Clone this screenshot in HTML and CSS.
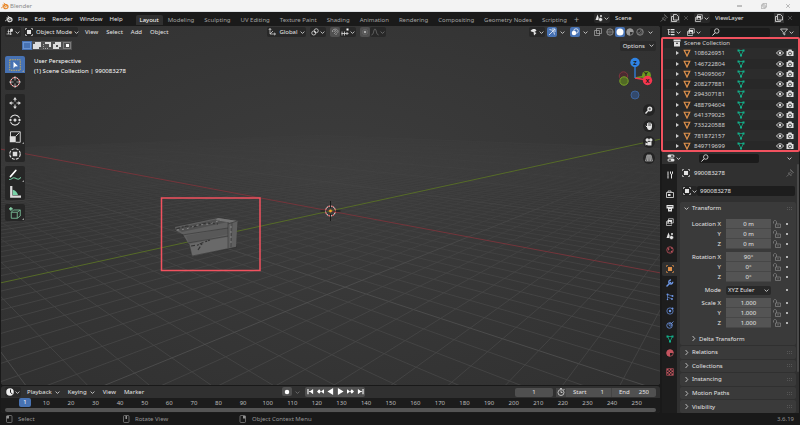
FILE: index.html
```html
<!DOCTYPE html>
<html lang="en">
<head>
    <title>Blender</title>
    <meta charset="UTF-8" />
    <link rel="stylesheet" href="styles.css">
    <script src="script.js" defer></script>
</head>
<body>
    <svg class="sprite" aria-hidden="true">
        <symbol id="blender" viewBox="0 0 16 16"><path d="M1 11.5 8 6H3.500M6 2.500l6 4.500" fill="none" stroke="currentColor" stroke-width="1.800" stroke-linecap="round"/><circle cx="9.800" cy="9.300" r="4.200" fill="none" stroke="currentColor" stroke-width="2.400"/><circle cx="9.800" cy="9.300" r="1.500" fill="currentColor"/></symbol>
        <symbol id="chevron" viewBox="0 0 8 8"><path d="M1 2.500 4 5.500 7 2.500" fill="none" stroke="currentColor" stroke-width="1.300"/></symbol>
        <symbol id="right" viewBox="0 0 8 8"><path d="M2.500 0 6 4 2.500 8" fill="none" stroke="currentColor" stroke-width="1.200"/></symbol>
        <symbol id="search" viewBox="0 0 16 16"><circle cx="9.500" cy="6" r="4.500" fill="none" stroke="currentColor" stroke-width="1.600"/><path d="M6 9.500 1 15" stroke="currentColor" stroke-width="2"/></symbol>
        <symbol id="view3d" viewBox="0 0 16 16"><path d="M5 3v9M1 12h11M3 7h10M9 5v9" stroke="currentColor" stroke-width="1.300" fill="none"/><circle cx="11" cy="4" r="3" fill="currentColor"/></symbol>
        <symbol id="object" viewBox="0 0 16 16"><rect x="4" y="4" width="8" height="8" fill="currentColor"/><path d="M1 4V1h3M12 1h3v3M15 12v3h-3M4 15H1v-3" fill="none" stroke="currentColor" stroke-width="1.300"/></symbol>
        <symbol id="axes" viewBox="0 0 16 16"><path d="M4 1v11h11M4 12l6-6M1.500 4 4 1l2.500 3M12 9.500l3 2.500-3 2.500" fill="none" stroke="currentColor" stroke-width="1.400"/></symbol>
        <symbol id="pivot" viewBox="0 0 16 16"><circle cx="5.500" cy="10" r="4" fill="none" stroke="currentColor" stroke-width="1.500"/><circle cx="10.500" cy="5.500" r="4" fill="none" stroke="currentColor" stroke-width="1.500"/><circle cx="8" cy="8" r="1.500" fill="currentColor"/></symbol>
        <symbol id="magnet" viewBox="0 0 16 16"><path d="M3 8C1 1 14 0 14 7c0 3-3 4-5 7M6.500 8C6 4 11 4 10.500 7 10 9 8 9 6.500 12" fill="none" stroke="currentColor" stroke-width="1.600"/></symbol>
        <symbol id="snap" viewBox="0 0 16 16"><path d="M1 11h14M2 7v8M7 7v8M12 8v6" stroke="currentColor" stroke-width="1.500"/><rect x="11" y="1" width="4" height="4" fill="#fff"/></symbol>
        <symbol id="dot" viewBox="0 0 16 16"><circle cx="8" cy="8" r="5.500" fill="none" stroke="currentColor" stroke-opacity=".4"/><circle cx="8" cy="8" r="2.500" fill="currentColor"/></symbol>
        <symbol id="falloff" viewBox="0 0 16 16"><path d="M1 14C6 13 5 2 8 2s2 11 7 12" fill="none" stroke="currentColor" stroke-width="1.500"/></symbol>
        <symbol id="pointer" viewBox="0 0 16 16"><path d="M1 6C5 1 10 1 13 5 9 9 5 9 1 6z" fill="currentColor"/><path d="M7 7l1 8 5-5z" fill="currentColor"/></symbol>
        <symbol id="gizmo" viewBox="0 0 16 16"><path d="M2 14 13 3M8 2h6v6M3 3c6 1 9 4 10 10" fill="none" stroke="currentColor" stroke-width="1.500"/></symbol>
        <symbol id="overlay" viewBox="0 0 16 16"><circle cx="6" cy="10" r="4.500" fill="currentColor"/><circle cx="10" cy="6" r="4.500" fill="none" stroke="currentColor" stroke-width="1.500"/></symbol>
        <symbol id="xray" viewBox="0 0 16 16"><path d="M5 1h10v10H5zM1 5h10v10H1z" fill="none" stroke="currentColor" stroke-width="1.400"/></symbol>
        <symbol id="wire" viewBox="0 0 16 16"><circle cx="8" cy="8" r="6.500" fill="none" stroke="currentColor" stroke-width="1.400"/><path d="M1 8h14M8 1v14M5 2c-2 4-2 8 0 12M11 2c2 4 2 8 0 12" fill="none" stroke="currentColor"/></symbol>
        <symbol id="solid" viewBox="0 0 16 16"><circle cx="8" cy="8" r="7" fill="#fff"/></symbol>
        <symbol id="material" viewBox="0 0 16 16"><circle cx="8" cy="8" r="6.500" fill="none" stroke="currentColor" stroke-width="1.500"/><path d="M8 1a7 7 0 0 0 0 14V8h7A7 7 0 0 0 8 1z" fill="currentColor"/></symbol>
        <symbol id="rendered" viewBox="0 0 16 16"><circle cx="8" cy="8" r="6.500" fill="none" stroke="currentColor" stroke-width="1.500"/><path d="M12 4a6 6 0 0 1-8 8M10 3a6 6 0 0 1-7 7" stroke="currentColor" fill="none"/></symbol>
        <symbol id="scene" viewBox="0 0 16 16"><path d="M5 1 9 12H1z" fill="currentColor"/><circle cx="11" cy="11" r="4" fill="currentColor" stroke="#222"/><circle cx="12" cy="4" r="2" fill="currentColor"/></symbol>
        <symbol id="layers" viewBox="0 0 16 16"><path d="M5 5V1.500h9.500V10H11M3 7H1v8h10v-2" fill="none" stroke="currentColor" stroke-width="1.400"/><rect x="3" y="4" width="9" height="8" fill="currentColor"/><path d="m4 11 3-4 2 2 1-1 1 3z" fill="#222"/></symbol>
        <symbol id="copy" viewBox="0 0 16 16"><path d="M5 1h6l4 4v7H5z M4 5H1v10h10v-2" fill="none" stroke="currentColor" stroke-width="1.600"/></symbol>
        <symbol id="close" viewBox="0 0 16 16"><path d="m3 3 10 10M13 3 3 13" stroke="currentColor" stroke-width="1.500"/></symbol>
        <symbol id="pin" viewBox="0 0 16 16"><path d="m9 1 6 6-2 .500-3 3v3L4.500 8h3l3-3zM7 10l-6 5" fill="none" stroke="currentColor" stroke-width="1.400"/></symbol>
        <symbol id="tree" viewBox="0 0 16 16"><path d="M1 3h5M3 3v10h4M3 8h4" fill="none" stroke="currentColor" stroke-width="1.500"/><path d="M7 3h8M8 8h7M8 13h7" stroke="currentColor" stroke-width="2.500"/></symbol>
        <symbol id="filter" viewBox="0 0 16 16"><path d="M1 2h14L9.500 8.500V14l-3-2V8.500z" fill="none" stroke="currentColor" stroke-width="1.500"/></symbol>
        <symbol id="box" viewBox="0 0 16 16"><path d="M1 1h14v4H1zM2 6h12v9H2z" fill="currentColor"/><path d="M6 8.500h4" stroke="#222" stroke-width="2"/></symbol>
        <symbol id="mesh" viewBox="0 0 16 16"><path d="M2.500 2.500h11L8 14z" fill="none" stroke="currentColor" stroke-width="2.400"/></symbol>
        <symbol id="meshdata" viewBox="0 0 16 16"><path d="M3 3h10L8 13z" fill="none" stroke="currentColor" stroke-width="1.500"/><path d="M1 1h4v4H1zM11 1h4v4h-4zM6 11h4v4H6z" fill="currentColor"/></symbol>
        <symbol id="eye" viewBox="0 0 16 16"><path d="M1 8c4-6 10-6 14 0-4 6-10 6-14 0z" fill="none" stroke="currentColor" stroke-width="1.700"/><circle cx="8" cy="8" r="2.500" fill="currentColor"/></symbol>
        <symbol id="camera" viewBox="0 0 16 16"><path d="M1 4h3l1-3h6l1 3h3v10H1z" fill="currentColor"/><circle cx="8" cy="9" r="3" fill="none" stroke="#222" stroke-width="1.600"/></symbol>
        <symbol id="props" viewBox="0 0 16 16"><path d="M4 4h8M4 12h8" stroke="currentColor" stroke-width="6" stroke-linecap="round"/><path d="M9 4h3M4 12h3" stroke="#222" stroke-width="2.500" stroke-linecap="round"/></symbol>
        <symbol id="lock" viewBox="0 0 16 16"><path d="M1 7V4c0-4 6-4 6 0v4M5 8h10v7H5zM10 10v3" fill="none" stroke="currentColor" stroke-width="1.400"/></symbol>
        <symbol id="tool" viewBox="0 0 16 16"><path d="M4 1v8M4 9v6M9 1v4c0 2 4 2 4 0V1M11 6v9" fill="none" stroke="currentColor" stroke-width="2"/></symbol>
        <symbol id="render" viewBox="0 0 16 16"><path d="M1 5h14v10H1zM4 4V2h6v2" fill="none" stroke="currentColor" stroke-width="1.600"/><path d="M4 8h5v4H4z" fill="currentColor"/></symbol>
        <symbol id="output" viewBox="0 0 16 16"><path d="M1 2h14v7H1zM4 9h8v6H4z" fill="currentColor"/><path d="M3 5h10M6 11h4" stroke="#222" stroke-width="1.300"/></symbol>
        <symbol id="world" viewBox="0 0 16 16"><circle cx="8" cy="8" r="6.500" fill="none" stroke="currentColor" stroke-width="1.500"/><path d="M3 4c4 0 5 2 3 4s2 3 1 6M10 2c-1 3 1 4 4 4M9 10l5-1-3 4z" fill="currentColor"/></symbol>
        <symbol id="wrench" viewBox="0 0 16 16"><path d="m2 14 7-7" stroke="currentColor" stroke-width="3" stroke-linecap="round"/><path d="M13.500 5.500A4 4 0 1 1 10 2" fill="none" stroke="currentColor" stroke-width="2.600"/></symbol>
        <symbol id="particles" viewBox="0 0 16 16"><path d="M3 3v10M3 3l10 3M3 8l9 4" stroke="currentColor" stroke-width="1.200"/><circle cx="3" cy="3" r="2" fill="currentColor"/><circle cx="13" cy="6" r="2" fill="currentColor"/><circle cx="12" cy="12" r="1.800" fill="currentColor"/><circle cx="3" cy="13" r="1.500" fill="currentColor"/></symbol>
        <symbol id="physics" viewBox="0 0 16 16"><circle cx="8" cy="8" r="6.300" fill="none" stroke="currentColor" stroke-width="1.400"/><circle cx="8" cy="8" r="2.500" fill="currentColor"/><circle cx="13" cy="3" r="2" fill="currentColor"/></symbol>
        <symbol id="constraint" viewBox="0 0 16 16"><circle cx="7" cy="9" r="5.500" fill="none" stroke="currentColor" stroke-width="1.600"/><circle cx="9" cy="7" r="3" fill="none" stroke="currentColor" stroke-width="1.600"/><path d="M9 7l6-6" stroke="currentColor" stroke-width="1.600"/></symbol>
        <symbol id="checker" viewBox="0 0 16 16"><rect x="1.500" y="1.500" width="13" height="13" fill="none" stroke="currentColor" stroke-width="1.400"/><path d="M2 2h3v3H2zM8 2h3v3H8zM5 5h3v3H5zM11 5h3v3h-3zM2 8h3v3H2zM8 8h3v3H8zM5 11h3v3H5zM11 11h3v3h-3z" fill="currentColor"/></symbol>
        <symbol id="select" viewBox="0 0 16 16"><rect x="1" y="1" width="14" height="14" fill="none" stroke="#d9b24c" stroke-width="1.200" stroke-dasharray="2 1.200"/><path d="M6 3.500v9l2-2.500 4-.500z" fill="#fff"/></symbol>
        <symbol id="cursor" viewBox="0 0 16 16"><circle cx="8" cy="8" r="6" fill="none" stroke="#eee" stroke-width="1.300"/><circle cx="8" cy="8" r="6" fill="none" stroke="#d44" stroke-width="1.300" stroke-dasharray="2.300 2.400"/><path d="M8 0v6M8 10v6M0 8h6M10 8h6" stroke="#ccc"/></symbol>
        <symbol id="move" viewBox="0 0 16 16"><path d="M8 2v4M8 10v4M2 8h4M10 8h4" stroke="currentColor" stroke-width="1.300"/><path d="M8 0l2.500 3.500h-5zM8 16l2.500-3.500h-5zM0 8l3.500-2.500v5zM16 8l-3.500-2.500v5z" fill="currentColor"/></symbol>
        <symbol id="rotate" viewBox="0 0 16 16"><path d="M2 5c3-5 9-5 12 0M2 11c3 5 9 5 12 0" fill="none" stroke="currentColor" stroke-width="1.500"/><path d="M8 5.500l2.500 2.500-2.500 2.500-2.500-2.500z" fill="currentColor"/><path d="M0 8l2-2 2 2-2 2zM12 8l2-2 2 2-2 2z" fill="currentColor"/></symbol>
        <symbol id="scale" viewBox="0 0 16 16"><path d="M2 8V1h13v14H9M9 7l5-5" fill="none" stroke="currentColor" stroke-width="1.200"/><path d="M1 7h8v8H1z" fill="currentColor"/></symbol>
        <symbol id="transform" viewBox="0 0 16 16"><circle cx="8" cy="8" r="7" fill="none" stroke="currentColor" stroke-width="1.500" stroke-dasharray="4 1.500"/><rect x="5" y="5" width="6" height="6" fill="currentColor"/></symbol>
        <symbol id="annotate" viewBox="0 0 16 16"><path d="M2 10 9 2" stroke="#fff" stroke-width="2.400" stroke-linecap="round"/><path d="M0 14c4 1 4-4 8-2s4 3 8-1" fill="none" stroke="#6fc29a" stroke-width="1.400"/></symbol>
        <symbol id="measure" viewBox="0 0 16 16"><path d="M5 12V5c4 1 6 4 7 7z" fill="#79d3a8"/><path d="M3 0v14h13" fill="none" stroke="#ddd" stroke-width="3"/></symbol>
        <symbol id="addcube" viewBox="0 0 16 16"><path d="M3 7h8v8H3zM3 7l3-3h9l-4 3M15 4v8l-4 3" fill="none" stroke="#79bd97" stroke-width="1.200"/><path d="M2.500 0v5M0 2.500h5" stroke="#8fe0b4" stroke-width="1.500"/></symbol>
        <symbol id="zoomin" viewBox="0 0 16 16"><circle cx="9.500" cy="6" r="5" fill="currentColor"/><path d="M6 9.500 1 15" stroke="currentColor" stroke-width="2.500"/><path d="M9.500 3.500v5M7 6h5" stroke="#222" stroke-width="1.200"/></symbol>
        <symbol id="hand" viewBox="0 0 16 16"><path d="M5 9V3M7.700 8V1.500M10.300 8V2M13 9V4M2 8l4 4" stroke="currentColor" stroke-width="1.900" stroke-linecap="round"/><path d="M4 8h10c0 4-1 8-5 8s-4-3-5-5z" fill="currentColor"/></symbol>
        <symbol id="movie" viewBox="0 0 16 16"><circle cx="4.500" cy="4" r="3.500" fill="currentColor"/><circle cx="11.500" cy="4" r="3.500" fill="currentColor"/><path d="M5 8h8v7H5zM1 9l4 2v2l-4 2z" fill="currentColor"/></symbol>
        <symbol id="persp" viewBox="0 0 16 16"><path d="M4 2h8l3 12H1zM3 6h10M2 10h12M8 2v12M6 2 5 14M10 2l1 12" fill="none" stroke="currentColor" stroke-width="1.100"/></symbol>
        <symbol id="clock" viewBox="0 0 16 16"><circle cx="8" cy="8" r="7.500" fill="#eee"/><path d="M9 3v6l4 3" fill="none" stroke="#222" stroke-width="2"/></symbol>
        <symbol id="stopwatch" viewBox="0 0 16 16"><circle cx="8" cy="9" r="6" fill="none" stroke="currentColor" stroke-width="1.500"/><path d="M8 5v4h3M6 1h4M13 2l2 2" fill="none" stroke="currentColor" stroke-width="1.500"/></symbol>
        <symbol id="record" viewBox="0 0 16 16"><circle cx="8" cy="8" r="4.500" fill="#fff"/></symbol>
        <symbol id="first" viewBox="0 0 16 16"><path d="M1 2h2.500v12H1zM14 2v12L6 8zM5 7h4v2H5z" fill="currentColor"/></symbol>
        <symbol id="prevkey" viewBox="0 0 16 16"><path d="M5 3l4 5-4 5-5-5zM16 3v10L9 8z" fill="currentColor"/></symbol>
        <symbol id="play" viewBox="0 0 16 16"><path d="M2 0v16l13-8z" fill="currentColor"/></symbol>
        <symbol id="mouse" viewBox="0 0 16 16"><rect x="3" y="1" width="11" height="14" rx="2" fill="none" stroke="currentColor" stroke-width="1.300"/><path d="M3 2h5v5H3z" fill="currentColor"/></symbol>
        <symbol id="mouseMiddle" viewBox="0 0 16 16"><rect x="3" y="1" width="11" height="14" rx="2" fill="none" stroke="currentColor" stroke-width="1.300"/><path d="M7 2h3v6H7z" fill="currentColor"/></symbol>
    </svg>

    <header class="titlebar">
        <svg class="icon logo"><use href="#blender"/></svg>
        <span>Blender</span>
        <div class="windowButtons">
            <button aria-label="Minimize"><svg class="icon small"><path d="M0 3h5" stroke="currentColor"/></svg></button>
            <button aria-label="Restore"><svg class="icon small" viewBox="0 0 16 16"><use href="#xray"/></svg></button>
            <button aria-label="Close"><svg class="icon small"><use href="#close"/></svg></button>
        </div>
    </header>

    <nav class="topbar">
        <div class="menus">
            <svg class="icon"><use href="#blender"/></svg>
            <button>File</button>
            <button>Edit</button>
            <button>Render</button>
            <button>Window</button>
            <button>Help</button>
        </div>
        <div class="workspaces">
            <button class="active">Layout</button>
            <button>Modeling</button>
            <button>Sculpting</button>
            <button>UV Editing</button>
            <button>Texture Paint</button>
            <button>Shading</button>
            <button>Animation</button>
            <button>Rendering</button>
            <button>Compositing</button>
            <button>Geometry Nodes</button>
            <button>Scripting</button>
            <button class="plus">+</button>
        </div>
        <div class="idBlock">
            <button class="drop" aria-label="Browse scene"><svg class="icon"><use href="#scene"/></svg><svg class="chev"><use href="#chevron"/></svg></button>
            <input type="text" value="Scene" aria-label="Scene">
            <svg class="icon dim"><use href="#pin"/></svg>
            <button class="copy" aria-label="New scene"><svg class="icon"><use href="#copy"/></svg></button>
            <button class="remove" aria-label="Delete scene"><svg class="icon small"><use href="#close"/></svg></button>
        </div>
        <div class="idBlock">
            <button class="drop" aria-label="Browse view layer"><svg class="icon"><use href="#layers"/></svg><svg class="chev"><use href="#chevron"/></svg></button>
            <input type="text" class="wide" value="ViewLayer" aria-label="View layer">
            <button class="copy" aria-label="New view layer"><svg class="icon"><use href="#copy"/></svg></button>
            <button class="remove" aria-label="Remove view layer"><svg class="icon small"><use href="#close"/></svg></button>
        </div>
    </nav>

    <main class="editors">
        <div class="leftColumn">
            <section class="viewport">
                <svg class="scene" viewBox="1 26 659 359" preserveAspectRatio="xMidYMid slice">
                    <defs>
                        <radialGradient id="ground" cx=".5" cy=".45" r=".7">
                            <stop offset="0" stop-color="#3d3d3d"/>
                            <stop offset="1" stop-color="#313131"/>
                        </radialGradient>
                        <linearGradient id="fade" gradientUnits="userSpaceOnUse" x1="0" y1="118" x2="0" y2="290">
                            <stop offset="0" stop-color="#000"/>
                            <stop offset=".25" stop-color="#444"/>
                            <stop offset="1" stop-color="#fff"/>
                        </linearGradient>
                        <mask id="fadeMask" maskUnits="userSpaceOnUse" x="0" y="26" width="662" height="360"><rect x="0" y="26" width="662" height="360" fill="url(#fade)"/></mask>
                    </defs>
                    <rect x="0" y="26" width="662" height="360" fill="url(#ground)"/>
                    <g id="floor" mask="url(#fadeMask)"></g>
                    <path class="axisX" d="M0 149 330 211 661 273"/>
                    <path class="axisY" d="M0 283 330 211 661 139"/>
                    <g class="model">
                        <path fill="#606060" d="M175 227l43-9 19.500 3-1.500 26-44 9.500-3-12-6-10-7-4z"/>
                        <path fill="#505050" d="M176 228l42-9 10 3-46 10z"/>
                        <path fill="#585858" d="M186 236l42-8v6l-39 9z"/>
                        <path fill="#696969" d="M190 244l38-7v11l-36 8z"/>
                        <path fill="#747474" d="M218 218l19.500 3-8 1.500-14-2.500z"/>
                        <path fill="none" stroke="#2d2d2d" stroke-width=".5" d="M182 235l46-7M188 243l40-7M228 222v26M232 223l-1 24M192 256l45-9M237 221l-9 3M189 244l3 12"/>
                        <path fill="none" stroke="#333" stroke-width="1.200" stroke-dasharray="4 2 2 1" d="M176 229l11-3 6 1 13-4 12 1M191 246l7-1 4-2 8-3M198 250l4-6"/>
                        <path fill="none" stroke="#909090" stroke-width=".8" stroke-dasharray="2 3" d="M177 230l9-1 12-4 12-1 11-4M231 226v20"/>
                    </g>
                    <g transform="translate(330.500 211)">
                        <circle r="5" fill="none" stroke="#eee"/>
                        <circle r="5" fill="none" stroke="#d33" stroke-dasharray="2 2"/>
                        <path d="M0-10v7M0 3v7M-10 0h7M3 0h7" stroke="#171717" stroke-width=".9"/>
                        <circle r="1.400" fill="#f5a128"/>
                    </g>
                    <rect class="mark" x="161.500" y="198" width="98.500" height="72.500"/>
                </svg>

                <div class="header">
                    <button class="drop" aria-label="Editor type"><svg class="icon"><use href="#view3d"/></svg><svg class="chev"><use href="#chevron"/></svg></button>
                    <label class="drop mode">
                        <svg class="icon"><use href="#object"/></svg>
                        <select aria-label="Mode"><option>Object Mode</option></select>
                        <svg class="chev"><use href="#chevron"/></svg>
                    </label>
                    <div class="menus">
                        <button>View</button>
                        <button>Select</button>
                        <button>Add</button>
                        <button>Object</button>
                    </div>
                    <div class="snapping">
                        <label class="drop orient">
                            <svg class="icon"><use href="#axes"/></svg>
                            <select aria-label="Transform orientation"><option>Global</option></select>
                            <svg class="chev"><use href="#chevron"/></svg>
                        </label>
                        <button class="drop" aria-label="Pivot point"><svg class="icon"><use href="#pivot"/></svg><svg class="chev"><use href="#chevron"/></svg></button>
                        <div class="joined">
                            <button class="toggle" aria-label="Snap"><svg class="icon"><use href="#magnet"/></svg></button>
                            <button class="drop" aria-label="Snap to"><svg class="icon"><use href="#snap"/></svg><svg class="chev"><use href="#chevron"/></svg></button>
                        </div>
                        <div class="joined">
                            <button class="toggle" aria-label="Proportional editing"><svg class="icon"><use href="#dot"/></svg></button>
                            <button class="drop dim" aria-label="Falloff"><svg class="icon"><use href="#falloff"/></svg><svg class="chev"><use href="#chevron"/></svg></button>
                        </div>
                    </div>
                    <div class="display">
                        <button class="drop" aria-label="Visibility"><svg class="icon"><use href="#pointer"/></svg><svg class="chev"><use href="#chevron"/></svg></button>
                        <div class="joined">
                            <button class="toggle on" aria-label="Gizmos"><svg class="icon"><use href="#gizmo"/></svg></button>
                            <button class="arrow" aria-label="Gizmo options"><svg class="chev"><use href="#chevron"/></svg></button>
                        </div>
                        <div class="joined">
                            <button class="toggle on" aria-label="Overlays"><svg class="icon"><use href="#overlay"/></svg></button>
                            <button class="arrow" aria-label="Overlay options"><svg class="chev"><use href="#chevron"/></svg></button>
                        </div>
                        <button class="toggle" aria-label="X-ray"><svg class="icon"><use href="#xray"/></svg></button>
                        <div class="joined">
                            <button class="shade" aria-label="Wireframe"><svg class="icon"><use href="#wire"/></svg></button>
                            <button class="shade on" aria-label="Solid"><svg class="icon"><use href="#solid"/></svg></button>
                            <button class="shade" aria-label="Material preview"><svg class="icon"><use href="#material"/></svg></button>
                            <button class="shade" aria-label="Rendered"><svg class="icon"><use href="#rendered"/></svg></button>
                            <button class="arrow" aria-label="Shading options"><svg class="chev"><use href="#chevron"/></svg></button>
                        </div>
                    </div>
                </div>

                <div class="toolSettings">
                    <div class="selectModes">
                        <button class="on" aria-label="Set"><svg viewBox="0 0 10 9"><rect x="1.500" y="1.500" width="7" height="6" fill="none" stroke="#8db4ee" stroke-dasharray="1 1"/></svg></button>
                        <button aria-label="Extend"><svg viewBox="0 0 10 9"><path d="M3 1h6v5H7v2H1V3h2z" fill="#ddd"/></svg></button>
                        <button aria-label="Subtract"><svg viewBox="0 0 10 9"><path d="M3 1h6v5H7V3H3z" fill="#ddd"/><path d="M1.500 3v4.500H7" fill="none" stroke="#aaa" stroke-dasharray="1 1"/></svg></button>
                        <button aria-label="Invert"><svg viewBox="0 0 10 9"><path d="M3 1h6v5H7v2H1V3h2zM4 4v2h2V4z" fill="#ddd" fill-rule="evenodd"/></svg></button>
                        <button aria-label="Intersect"><svg viewBox="0 0 10 9"><rect x="1.500" y="1.500" width="7" height="6" fill="none" stroke="#aaa" stroke-dasharray="1 1"/><path d="M4 3h3v3H4z" fill="#fff"/></svg></button>
                    </div>
                    <button class="options">Options<svg class="chev"><use href="#chevron"/></svg></button>
                </div>

                <div class="canvasOverlay">
                    <div class="toolbar">
                        <div class="toolGroup">
                            <button class="on more" aria-label="Select box"><svg><use href="#select"/></svg></button>
                            <button aria-label="Cursor"><svg><use href="#cursor"/></svg></button>
                        </div>
                        <div class="toolGroup">
                            <button aria-label="Move"><svg><use href="#move"/></svg></button>
                            <button aria-label="Rotate"><svg><use href="#rotate"/></svg></button>
                            <button class="more" aria-label="Scale"><svg><use href="#scale"/></svg></button>
                            <button aria-label="Transform"><svg><use href="#transform"/></svg></button>
                        </div>
                        <div class="toolGroup">
                            <button class="more" aria-label="Annotate"><svg><use href="#annotate"/></svg></button>
                            <button aria-label="Measure"><svg><use href="#measure"/></svg></button>
                        </div>
                        <div class="toolGroup">
                            <button class="more" aria-label="Add cube"><svg><use href="#addcube"/></svg></button>
                        </div>
                    </div>
                    <div class="viewInfo">
                        <div>User Perspective</div>
                        <div>(1) Scene Collection | 990083278</div>
                    </div>
                    <div class="navigation">
                        <svg class="navGizmo" viewBox="0 0 40 44">
                            <circle cx="8.500" cy="20" r="4.200" fill="#4a2b30" stroke="#80343f"/>
                            <path d="M20 22l11-2" stroke="#6d9a20" stroke-width="1.300"/>
                            <circle cx="31.500" cy="19.500" r="4.500" fill="#6d9a20"/>
                            <path d="M20 22l12 2" stroke="#f0364f" stroke-width="1.300"/>
                            <circle cx="9" cy="25" r="4.200" fill="#516a24" stroke="#7ba428"/>
                            <circle cx="20" cy="39" r="4" fill="#33496b" stroke="#3d639b"/>
                            <path d="M20 22V8" stroke="#2f83e3" stroke-width="1.300"/>
                            <circle cx="20" cy="6.500" r="4.700" fill="#2f83e3"/>
                            <text x="31" y="20">Y</text>
                            <circle cx="32.500" cy="24.500" r="4.700" fill="#f5364f"/>
                            <text x="20" y="8.500">Z</text>
                            <text x="32.500" y="27">X</text>
                        </svg>
                        <button aria-label="Zoom"><svg class="icon"><use href="#zoomin"/></svg></button>
                        <button aria-label="Pan"><svg class="icon"><use href="#hand"/></svg></button>
                        <button aria-label="Camera view"><svg class="icon"><use href="#movie"/></svg></button>
                        <button aria-label="Perspective"><svg class="icon"><use href="#persp"/></svg></button>
                    </div>
                </div>
            </section>

            <section class="timeline">
                <div class="header">
                    <button class="drop" aria-label="Editor type"><svg class="icon"><use href="#clock"/></svg><svg class="chev"><use href="#chevron"/></svg></button>
                    <div class="menus">
                        <button class="pop">Playback<svg class="chev"><use href="#chevron"/></svg></button>
                        <button class="pop">Keying<svg class="chev"><use href="#chevron"/></svg></button>
                        <button>View</button>
                        <button>Marker</button>
                    </div>
                    <div class="playback">
                        <div class="joined">
                            <button class="toggle" aria-label="Auto keying"><svg class="icon"><use href="#record"/></svg></button>
                            <button class="arrow dim" aria-label="Keying options"><svg class="chev"><use href="#chevron"/></svg></button>
                        </div>
                        <div class="transport">
                            <button aria-label="Jump to start"><svg><use href="#first"/></svg></button>
                            <button aria-label="Previous keyframe"><svg><use href="#prevkey"/></svg></button>
                            <button aria-label="Play reversed"><svg class="flip"><use href="#play"/></svg></button>
                            <button aria-label="Play"><svg><use href="#play"/></svg></button>
                            <button aria-label="Next keyframe"><svg class="flip"><use href="#prevkey"/></svg></button>
                            <button aria-label="Jump to end"><svg class="flip"><use href="#first"/></svg></button>
                        </div>
                    </div>
                    <div class="frames">
                        <input type="text" class="current" value="1" aria-label="Current frame">
                        <div class="range">
                            <button aria-label="Preview range"><svg class="icon"><use href="#stopwatch"/></svg></button>
                            <label>Start<input type="text" value="1"></label>
                            <label>End<input type="text" value="250"></label>
                        </div>
                    </div>
                </div>
                <div class="ruler">
                    <div class="startCell"><span class="playhead">1</span></div>
                    <div class="ticks" id="ticks"></div>
                </div>
                <div class="scroller"><div class="thumb"></div></div>
            </section>
        </div>

        <div class="rightColumn">
            <section class="outliner">
                <div class="header">
                    <button class="drop" aria-label="Editor type"><svg class="icon"><use href="#tree"/></svg><svg class="chev"><use href="#chevron"/></svg></button>
                    <button class="drop" aria-label="Display mode"><svg class="icon"><use href="#layers"/></svg><svg class="chev"><use href="#chevron"/></svg></button>
                    <label class="search"><svg class="icon"><use href="#search"/></svg><input type="text" aria-label="Filter objects"></label>
                    <button class="drop end" aria-label="Filter"><svg class="icon"><use href="#filter"/></svg><svg class="chev"><use href="#chevron"/></svg></button>
                </div>
                <ul class="tree" id="objectTree">
                    <li class="root"><svg class="icon"><use href="#box"/></svg><span>Scene Collection</span></li>
                </ul>
                <div class="outlinerMark"></div>
            </section>

            <section class="properties">
                <div class="header">
                    <button class="drop" aria-label="Editor type"><svg class="icon"><use href="#props"/></svg><svg class="chev"><use href="#chevron"/></svg></button>
                    <label class="search"><svg class="icon"><use href="#search"/></svg><input type="text" aria-label="Search properties"></label>
                    <button class="arrow end" aria-label="Options"><svg class="chev"><use href="#chevron"/></svg></button>
                </div>
                <div class="propertiesBody">
                    <div class="tabs">
                        <div><button aria-label="Tool"><svg class="icon"><use href="#tool"/></svg></button></div>
                        <div>
                            <button aria-label="Render"><svg class="icon"><use href="#render"/></svg></button>
                            <button aria-label="Output"><svg class="icon"><use href="#output"/></svg></button>
                            <button aria-label="View layer"><svg class="icon"><use href="#layers"/></svg></button>
                            <button aria-label="Scene"><svg class="icon"><use href="#scene"/></svg></button>
                            <button class="red" aria-label="World"><svg class="icon"><use href="#world"/></svg></button>
                        </div>
                        <div>
                            <button class="orange active" aria-label="Object"><svg class="icon"><use href="#object"/></svg></button>
                            <button class="blue" aria-label="Modifiers"><svg class="icon"><use href="#wrench"/></svg></button>
                            <button class="blue" aria-label="Particles"><svg class="icon"><use href="#particles"/></svg></button>
                            <button class="blue" aria-label="Physics"><svg class="icon"><use href="#physics"/></svg></button>
                            <button class="blue" aria-label="Constraints"><svg class="icon"><use href="#constraint"/></svg></button>
                            <button class="green" aria-label="Data"><svg class="icon"><use href="#meshdata"/></svg></button>
                            <button class="red" aria-label="Material"><svg class="icon"><use href="#material"/></svg></button>
                        </div>
                        <div><button class="red" aria-label="Texture"><svg class="icon"><use href="#checker"/></svg></button></div>
                    </div>
                    <div class="panels">
                        <div class="context"><svg class="icon"><use href="#object"/></svg><span>990083278</span><svg class="icon dim"><use href="#pin"/></svg></div>
                        <div class="datablock">
                            <button class="drop" aria-label="Browse object"><svg class="icon"><use href="#object"/></svg><svg class="chev"><use href="#chevron"/></svg></button>
                            <input type="text" value="990083278" aria-label="Object name">
                        </div>
                        <div class="panel open">
                            <button class="panelTitle"><svg class="chev"><use href="#chevron"/></svg>Transform<i class="grip"></i></button>
                            <div class="fields" id="fields"></div>
                            <button class="subpanel"><svg class="chev"><use href="#right"/></svg>Delta Transform</button>
                        </div>
                        <div class="closedPanels">
                            <button class="panelTitle"><svg class="chev"><use href="#right"/></svg>Relations<i class="grip"></i></button>
                            <button class="panelTitle"><svg class="chev"><use href="#right"/></svg>Collections<i class="grip"></i></button>
                            <button class="panelTitle"><svg class="chev"><use href="#right"/></svg>Instancing<i class="grip"></i></button>
                            <button class="panelTitle"><svg class="chev"><use href="#right"/></svg>Motion Paths<i class="grip"></i></button>
                            <button class="panelTitle"><svg class="chev"><use href="#right"/></svg>Visibility<i class="grip"></i></button>
                        </div>
                    </div>
                    <div class="scrollbar"></div>
                </div>
            </section>
        </div>
    </main>

    <footer class="status">
        <span><svg class="icon"><use href="#mouse"/></svg>Select</span>
        <span><svg class="icon"><use href="#mouseMiddle"/></svg>Rotate View</span>
        <span><svg class="icon flip"><use href="#mouse"/></svg>Object Context Menu</span>
        <span class="version">3.6.19</span>
    </footer>
</body>
</html>
```

FILE: styles.css
```css
*
{
    box-sizing: border-box;
}

body
{
    margin: 0;
    height: 100vh;
    display: flex;
    flex-direction: column;
    overflow: hidden;
    background-color: #191919;
    color: #e4e4e4;
    font-family: "Noto Sans", sans-serif;
    font-size: 6px;
    line-height: 10px;
}

button, input, select
{
    margin: 0;
    padding: 0;
    border: 0;
    outline: 0;
    background: none;
    color: inherit;
    font: inherit;
    appearance: none;
}

button
{
    display: flex;
    align-items: center;
    justify-content: center;
    white-space: nowrap;
}

input
{
    min-width: 0;
}

.sprite
{
    display: none;
}

.icon
{
    width: 8px;
    height: 8px;
    flex: none;
}

.small
{
    width: 6px;
    height: 6px;
}

.chev
{
    width: 5px;
    height: 5px;
    flex: none;
}

.flip
{
    transform: scaleX(-1);
}

.dim
{
    color: #777;
}

/* Window frame */

.titlebar
{
    display: flex;
    align-items: center;
    gap: 1px;
    height: 12px;
    padding: 0 9px 0 1px;
    background-color: #f3f3f3;
    border-bottom: 1px solid #dcdfe2;
    color: #8a8a8a;
}

.titlebar .logo
{
    color: #e88320;
}

.windowButtons
{
    display: flex;
    gap: 18px;
    margin-left: auto;
}

.topbar
{
    display: flex;
    height: 14px;
    padding: 0 6px 1px 5px;
    background-color: #1a1a1a;
}

.menus
{
    display: flex;
    align-items: center;
    gap: 8px;
}

.topbar .menus
{
    gap: 7px;
}

.topbar .menus .icon
{
    margin-right: -2px;
}

.workspaces
{
    display: flex;
    margin-left: 13px;
    padding-top: 3px;
    color: #a4a4a4;
}

.workspaces button
{
    padding: 0 5px;
    border-radius: 2px 2px 0 0;
}

.workspaces .active
{
    padding: 0 4px;
    background-color: #303030;
    color: #fff;
}

.workspaces .plus
{
    padding: 0 2px;
    font-size: 9px;
}

.idBlock
{
    display: flex;
    align-items: center;
    gap: 2px;
    height: 10px;
    margin: 1px 0 0 4px;
}

.workspaces + .idBlock
{
    margin-left: auto;
}

.idBlock input
{
    width: 46px;
    height: 10px;
    padding: 0 3px;
}

.idBlock .wide
{
    width: 60px;
}

.idBlock .copy
{
    width: 10px;
    height: 10px;
    background-color: #333;
}

.idBlock .remove
{
    width: 8px;
    color: #777;
}

/* Editors */

.editors
{
    flex: 1;
    min-height: 0;
    display: grid;
    grid-template-columns: minmax(0, 1fr) 137px;
    gap: 2px;
    padding: 0 1px;
}

.leftColumn
{
    display: flex;
    flex-direction: column;
    gap: 1px;
    min-height: 0;
}

.header
{
    display: flex;
    align-items: center;
    height: 12px;
    padding: 0 4px;
}

.drop
{
    display: flex;
    align-items: center;
    gap: 1px;
    height: 10px;
    padding: 0 1px;
    border-radius: 2px;
    background-color: #282828;
}

.drop select
{
    flex: 1;
    padding-left: 2px;
}

.joined
{
    display: flex;
}

.toggle, .shade
{
    width: 10px;
    height: 10px;
    border-radius: 2px;
}

.toggle
{
    background-color: #505050;
    color: #aaa;
}

.toggle.on, .shade.on
{
    background-color: #4772b3;
    color: #fff;
}

.arrow
{
    width: 11px;
    height: 10px;
}

/* 3D viewport */

.viewport
{
    position: relative;
    flex: 1;
    min-height: 0;
    display: flex;
    flex-direction: column;
    overflow: hidden;
    border-radius: 3px;
    background-color: #393939;
}

.viewport > div
{
    position: relative;
}

.scene
{
    position: absolute;
    width: 100%;
    height: 100%;
}

.scene .line
{
    fill: none;
    stroke: #474747;
    stroke-width: 0.8;
}

.scene .major
{
    stroke: #525252;
}

.axisX, .axisY
{
    fill: none;
    stroke: #74353b;
}

.axisY
{
    stroke: #566b28;
}

.mark
{
    fill: none;
    stroke: #f2525f;
    stroke-width: 1.5;
}

.viewport .mode
{
    width: 54px;
    margin: 0 7px 0 3px;
}

.snapping, .display
{
    display: flex;
    align-items: center;
    gap: 4px;
}

.snapping
{
    margin-left: 99px;
}

.orient
{
    width: 39px;
}

.display
{
    gap: 2px;
    margin-left: auto;
}

.display > .toggle
{
    background: none;
}

.shade
{
    color: #999;
}

.toolSettings
{
    display: flex;
    justify-content: space-between;
    align-items: center;
    height: 15px;
    padding: 0 4px 0 21px;
}

.selectModes
{
    display: flex;
}

.selectModes button
{
    width: 10px;
    height: 9px;
    background-color: #505050;
}

.selectModes .on
{
    background-color: #4772b3;
}

.selectModes svg
{
    width: 10px;
    height: 9px;
}

.options
{
    gap: 4px;
    padding: 0 2px 0 3px;
    border-radius: 2px;
    background-color: #2a2a2a;
}

.canvasOverlay
{
    display: flex;
    align-items: flex-start;
    padding: 3px 2px 0 4px;
}

.toolbar
{
    display: flex;
    flex-direction: column;
    gap: 4px;
}

.toolGroup
{
    overflow: hidden;
    border-radius: 2px;
    background-color: #262626;
}

.toolGroup button
{
    position: relative;
    width: 20px;
    height: 17px;
    color: #ddd;
}

.toolGroup svg
{
    width: 12px;
    height: 12px;
}

.toolGroup .on
{
    background-color: #4772b3;
}

.toolGroup .more::after
{
    content: "";
    position: absolute;
    right: 1px;
    bottom: 1px;
    border: 1px solid #999;
    border-top-color: transparent;
    border-left-color: transparent;
}

.viewInfo
{
    margin-left: 9px;
    color: #fff;
}

.navigation
{
    display: flex;
    flex-direction: column;
    align-items: flex-end;
    gap: 4px;
    margin-left: auto;
}

.navGizmo
{
    width: 40px;
    height: 44px;
    margin-right: 3px;
}

.navGizmo text
{
    fill: #1b1b1b;
    font-size: 6px;
    font-weight: bold;
    text-anchor: middle;
}

.navigation button
{
    width: 12px;
    height: 12px;
    margin-right: 3px;
    border-radius: 50%;
    background-color: #242424;
}

/* Timeline */

.timeline
{
    border-radius: 3px;
    overflow: hidden;
    background-color: #303030;
}

.timeline .drop
{
    margin-right: 6px;
}

.pop
{
    gap: 3px;
}

.playback
{
    display: flex;
    gap: 2px;
    margin-left: 138px;
}

.playback .toggle
{
    height: 9px;
}

.transport
{
    display: flex;
    border-radius: 2px;
    background-color: #505050;
    color: #fff;
}

.transport button
{
    width: 10px;
    height: 9px;
}

.transport svg
{
    width: 7px;
    height: 7px;
}

.frames
{
    display: flex;
    gap: 3px;
    margin-left: auto;
}

.frames .current
{
    width: 38px;
    height: 9px;
    border-radius: 2px;
    background-color: #505050;
    text-align: center;
}

.range
{
    display: flex;
    height: 9px;
    border-radius: 2px;
    background-color: #505050;
}

.range button
{
    width: 10px;
    background-color: #444;
}

.range label
{
    display: flex;
    width: 45px;
    padding: 0 7px;
    line-height: 9px;
}

.range label + label
{
    border-left: 1px solid #444;
}

.range input
{
    flex: 1;
    width: 10px;
    text-align: right;
}

.ruler
{
    display: flex;
    height: 10px;
    padding-right: 11px;
    background-color: #1c1c1c;
    color: #bbb;
}

.startCell
{
    width: 33px;
    padding-left: 18px;
}

.playhead
{
    display: block;
    width: 12px;
    height: 9px;
    border-radius: 2px;
    background-color: #4772b3;
    color: #fff;
    line-height: 9px;
    text-align: center;
}

.ticks
{
    flex: 1;
    display: grid;
    grid-template-columns: repeat(25, 1fr);
    text-align: center;
}

.scroller
{
    height: 5px;
    padding: 0 4px;
    background-color: #1c1c1c;
}

.thumb
{
    height: 4px;
    border-radius: 2px;
    background-color: #545454;
}

/* Outliner */

.rightColumn
{
    display: grid;
    grid-template-rows: 125fr 261fr;
    gap: 1px;
    min-height: 0;
}

.outliner
{
    position: relative;
    display: flex;
    flex-direction: column;
    min-height: 0;
    background-color: #282828;
}

.outliner .header
{
    gap: 4px;
}

.search
{
    display: flex;
    align-items: center;
    width: 60px;
    height: 9px;
    margin-left: 4px;
    padding-left: 2px;
    border-radius: 2px;
    background-color: #1b1b1b;
}

.search input
{
    flex: 1;
}

.end
{
    margin-left: auto;
}

.tree
{
    flex: 1;
    min-height: 0;
    display: grid;
    grid-auto-rows: minmax(0, 1fr);
    margin: 0;
    padding: 0 3px 0 2px;
    list-style: none;
    overflow: hidden;
}

.tree li
{
    display: flex;
    align-items: center;
    min-height: 0;
    padding: 0 2px 0 12px;
    color: #d0d0d0;
}

.tree li:nth-child(even)
{
    background-color: #2c2c2c;
}

.tree .root
{
    gap: 3px;
    padding-left: 9px;
}

.root .icon, .tree .eye
{
    color: #e0e0e0;
}

.expand
{
    border: 2px solid transparent;
    border-left: 3px solid #ccc;
    border-right: 0;
}

.orange
{
    color: #e0924c;
}

.green
{
    color: #12b08a;
}

.red
{
    color: #c4545f;
}

.blue
{
    color: #6d97e6;
}

.tree .orange
{
    margin: 0 3px 0 4px;
}

.tree .name
{
    width: 43px;
}

.tree .eye
{
    margin-left: auto;
}

.tree .camera
{
    margin-left: 2px;
    color: #e0e0e0;
}

.outlinerMark
{
    position: absolute;
    inset: 11px -1px -1px -1px;
    border: 2px solid #f2525f;
    border-radius: 2px;
}

/* Properties */

.properties
{
    display: flex;
    flex-direction: column;
    min-height: 0;
    background-color: #303030;
}

.properties .search
{
    margin-left: 17px;
}

.properties .drop
{
    background: none;
}

.propertiesBody
{
    flex: 1;
    min-height: 0;
    display: flex;
}

.tabs
{
    display: flex;
    flex-direction: column;
    gap: 5px;
    width: 15px;
    padding-top: 4px;
    background-color: #1d1d1d;
}

.tabs button
{
    width: 15px;
    height: 14px;
}

.tabs .active
{
    border-radius: 2px 0 0 2px;
    background-color: #303030;
}

.panels
{
    flex: 1;
    min-width: 0;
    display: flex;
    flex-direction: column;
    padding: 3px 1px 0 3px;
}

.context
{
    display: flex;
    align-items: center;
    gap: 4px;
    height: 12px;
    padding: 0 2px;
}

.context .dim
{
    margin-left: auto;
}

.datablock
{
    display: flex;
    height: 10px;
    margin: 7px 1px 6px 2px;
}

.datablock .drop
{
    width: 15px;
    background-color: #252525;
}

.datablock input
{
    flex: 1;
    padding-left: 3px;
    border-radius: 2px;
    background-color: #1d1d1d;
}

.panel
{
    border-radius: 2px;
    background-color: #3a3a3a;
}

.panelTitle
{
    width: 100%;
    height: 12px;
    gap: 3px;
    justify-content: flex-start;
    padding: 0 4px;
}

.grip
{
    width: 5px;
    height: 3px;
    margin-left: auto;
    border-top: 1px dotted #555;
    border-bottom: 1px dotted #555;
}

.fields
{
    display: flex;
    flex-direction: column;
    gap: 3px;
    padding-top: 5px;
}

.fieldRow
{
    display: grid;
    grid-template-columns: 41px 45px 10px 1fr;
    column-gap: 5px;
    align-items: center;
    height: 10px;
}

.fieldRow label
{
    text-align: right;
}

.fieldRow input
{
    width: 45px;
    height: 10px;
    border-bottom: 1px solid #474747;
    background-color: #545454;
    text-align: center;
}

.fieldRow .icon
{
    margin-left: -3px;
    color: #888;
}

.fieldRow .pick
{
    display: flex;
    align-items: center;
    width: 45px;
    height: 9px;
    padding: 0 2px;
    border-radius: 2px;
    background-color: #282828;
}

.pick select
{
    flex: 1;
}

.key
{
    width: 2px;
    height: 2px;
    margin-left: -5px;
    border-radius: 50%;
    background-color: #ddd;
}

.subpanel
{
    gap: 3px;
    height: 12px;
    margin: 5px 0 0 11px;
    padding-bottom: 1px;
}

.closedPanels
{
    flex: 1;
    display: grid;
    grid-auto-rows: 1fr;
    gap: 1px;
    padding-top: 1px;
}

.closedPanels .panelTitle
{
    height: auto;
    border-radius: 2px;
    background-color: #3a3a3a;
}

.scrollbar
{
    width: 2px;
    height: 208px;
    border-radius: 1px;
    background-color: #4a4a4a;
}

/* Status bar */

.status
{
    display: grid;
    grid-template-columns: 117px 117px 117px 1fr;
    align-items: center;
    height: 12px;
    padding: 0 6px 0 5px;
    color: #959595;
}

.status span
{
    display: flex;
    align-items: center;
    gap: 5px;
}

.status .version
{
    justify-content: flex-end;
}
```

FILE: script.js
```js
var objects = ["108626951", "146722804", "154095067", "208277881", "294307181",
    "488794604", "641379025", "733220588", "781872157", "849719699"];

var transforms =
[
    [["Location X", "0 m"], ["Y", "0 m"], ["Z", "0 m"]],
    [["Rotation X", "90°"], ["Y", "0°"], ["Z", "0°"]],
    [["Mode", "XYZ Euler"]],
    [["Scale X", "1.000"], ["Y", "1.000"], ["Z", "1.000"]]
];

function icon(name)
{
    return '<svg class="icon"><use href="#' + name + '"/></svg>';
}

function buildTree()
{
    var html = "";
    objects.forEach(function (name)
    {
        html += '<li><i class="expand"></i><svg class="icon orange"><use href="#mesh"/></svg>' +
            '<span class="name">' + name + '</span>' +
            '<svg class="icon green"><use href="#meshdata"/></svg>' +
            '<button class="eye" aria-label="Hide">' + icon("eye") + '</button>' +
            '<button class="camera" aria-label="Disable in renders">' + icon("camera") + '</button></li>';
    });
    document.querySelector("#objectTree").insertAdjacentHTML("beforeend", html);
}

function buildFields()
{
    var html = "";
    transforms.forEach(function (group, g)
    {
        html += "<div>";
        group.forEach(function (field, f)
        {
            var id = "field" + g + f;
            html += '<div class="fieldRow"><label for="' + id + '">' + field[0] + '</label>';
            if (field[0] == "Mode")
            {
                html += '<div class="pick"><select id="' + id + '"><option>' + field[1] + '</option></select>' +
                    '<svg class="chev"><use href="#chevron"/></svg></div><span></span>';
            }
            else
            {
                html += '<input type="text" id="' + id + '" value="' + field[1] + '">' + icon("lock");
            }
            html += '<i class="key"></i></div>';
        });
        html += "</div>";
    });
    document.querySelector("#fields").innerHTML = html;
}

function buildTicks()
{
    var html = "";
    for (var frame = 10; frame <= 250; frame += 10) { html += "<span>" + frame + "</span>"; }
    document.querySelector("#ticks").innerHTML = html;
}

// Perspective camera looking at the world origin
var focal = 458, distance = 31, sin = 0.202, cos = 0.979;

function offset(x, y)
{
    return { right: 0.734 * x + 0.679 * y, forward: -0.679 * x + 0.734 * y };
}

function project(p)
{
    var depth = distance + p.forward * cos;
    return (330.5 + focal * p.right / depth).toFixed(2) + " " + (211 - focal * p.forward * sin / depth).toFixed(2);
}

function floorLine(a, b, major)
{
    var near = -28;
    if (a.forward < near && b.forward < near) { return ""; }
    if (a.forward > b.forward) { var swap = a; a = b; b = swap; }
    if (a.forward < near)
    {
        var t = (near - a.forward) / (b.forward - a.forward);
        a = { right: a.right + t * (b.right - a.right), forward: near };
    }
    return '<path class="line' + (major ? " major" : "") + '" d="M' + project(a) + "L" + project(b) + '"/>';
}

function buildFloor()
{
    var html = "", size = 90;
    for (var n = -size; n <= size; n++)
    {
        if (n == 0) { continue; }
        html += floorLine(offset(-size, n), offset(size, n), n % 10 == 0);
        html += floorLine(offset(n, -size), offset(n, size), n % 10 == 0);
    }
    document.querySelector("#floor").innerHTML = html;
}

buildTree();
buildFields();
buildTicks();
buildFloor();
```
